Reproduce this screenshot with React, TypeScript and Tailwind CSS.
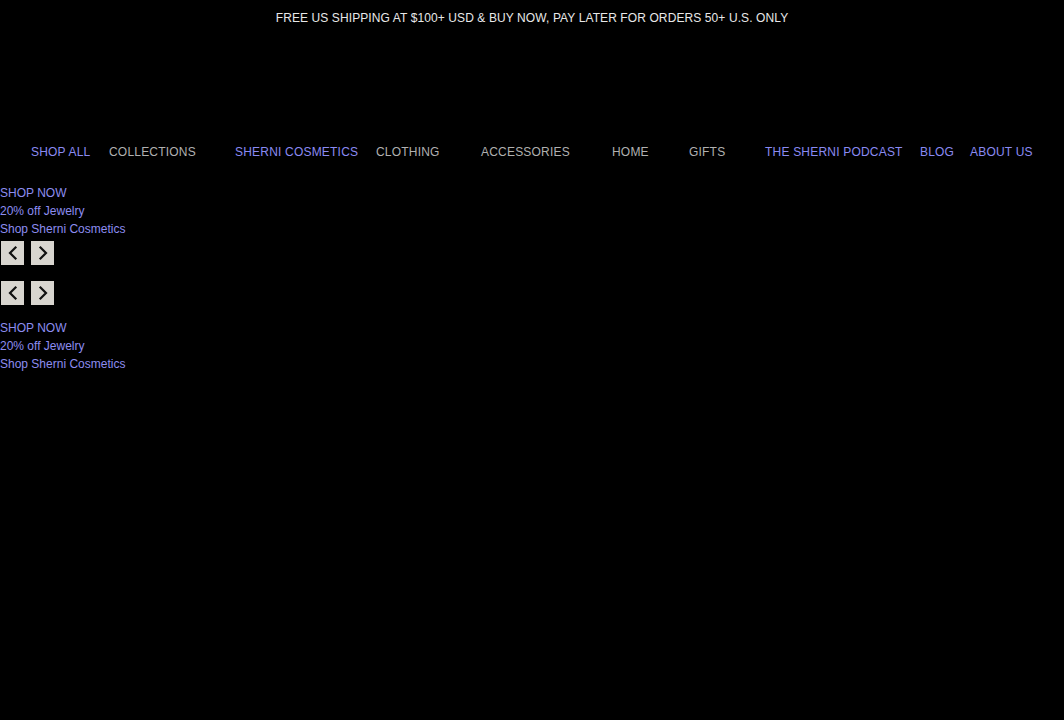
import React from "react";

const navItems: { label: string; blue: boolean; w: string }[] = [
  { label: "SHOP ALL", blue: true, w: "w-[78px]" },
  { label: "COLLECTIONS", blue: false, w: "w-[126px]" },
  { label: "SHERNI COSMETICS", blue: true, w: "w-[141px]" },
  { label: "CLOTHING", blue: false, w: "w-[105px]" },
  { label: "ACCESSORIES", blue: false, w: "w-[131px]" },
  { label: "HOME", blue: false, w: "w-[77px]" },
  { label: "GIFTS", blue: false, w: "w-[76px]" },
  { label: "THE SHERNI PODCAST", blue: true, w: "w-[155px]" },
  { label: "BLOG", blue: true, w: "w-[50px]" },
  { label: "ABOUT US", blue: true, w: "" },
];

function Chevron({ dir }: { dir: "left" | "right" }) {
  return (
    <svg width="14" height="16" viewBox="0 0 14 16" fill="none">
      {dir === "left" ? (
        <path d="M9.5 2.5 L4 8 L9.5 13.5" stroke="#111" strokeWidth="2.2" strokeLinecap="square" />
      ) : (
        <path d="M4.5 2.5 L10 8 L4.5 13.5" stroke="#111" strokeWidth="2.2" strokeLinecap="square" />
      )}
    </svg>
  );
}

function Arrows() {
  return (
    <div className="flex gap-[7px] pl-[1px]">
      <button className="w-[23px] h-[24px] bg-[#d8d5cf] flex items-center justify-center">
        <Chevron dir="left" />
      </button>
      <button className="w-[23px] h-[24px] bg-[#d8d5cf] flex items-center justify-center">
        <Chevron dir="right" />
      </button>
    </div>
  );
}

function Links() {
  return (
    <div className="flex flex-col text-[12px] leading-[18px] text-[#8d8df0]">
      <a>SHOP NOW</a>
      <a>20% off Jewelry</a>
      <a>Shop Sherni Cosmetics</a>
    </div>
  );
}

export default function App() {
  return (
    <div className="w-[1064px] h-[720px] bg-black overflow-hidden" style={{ fontFamily: '"Liberation Sans", Arial, sans-serif' }}>
      <div className="h-[36px] flex items-center justify-center text-[12px] text-[#e8e8e8] tracking-[0.1px]">
        FREE US SHIPPING AT $100+ USD &amp; BUY NOW, PAY LATER FOR ORDERS 50+ U.S. ONLY
      </div>
      <div className="h-[106px]" />
      <nav className="flex items-center h-[20px] pl-[31px] text-[12px] leading-[20px] tracking-[0.2px]">
        {navItems.map((item) => (
          <span
            key={item.label}
            className={(item.blue ? "text-[#8a8af2] " : "text-[#b0b0b0] ") + "shrink-0 whitespace-nowrap " + item.w}
          >
            {item.label}
          </span>
        ))}
      </nav>
      <div className="h-[22px]" />
      <Links />
      <div className="h-[3px]" />
      <Arrows />
      <div className="h-[16px]" />
      <Arrows />
      <div className="h-[14px]" />
      <Links />
    </div>
  );
}
